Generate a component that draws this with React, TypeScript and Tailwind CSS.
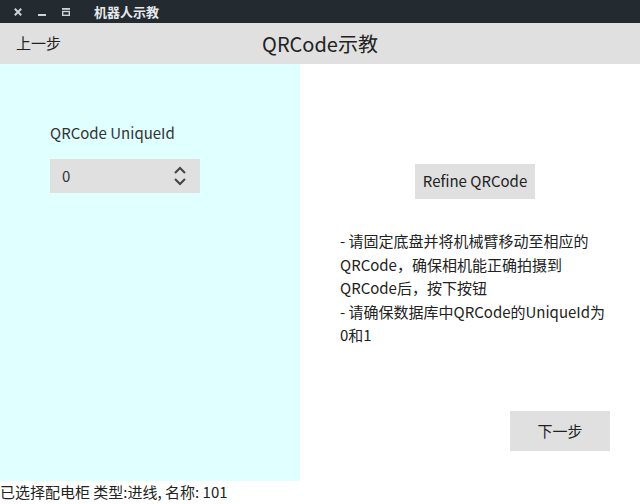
const font = { fontFamily: '"Noto Sans CJK SC", "Noto Sans", sans-serif' };

function TitleBar() {
  return (
    <div className="h-[23px] bg-[#232b31] flex items-center text-white">
      <div className="flex items-center gap-[16px] pl-[14px]">
        <svg width="8" height="8" viewBox="0 0 8 8">
          <path d="M0.8 0.8 L7.2 7.2 M7.2 0.8 L0.8 7.2" stroke="#cfd3d6" strokeWidth="2" />
        </svg>
        <svg width="8" height="8" viewBox="0 0 8 8">
          <rect x="0" y="6" width="8" height="2" fill="#cfd3d6" />
        </svg>
        <svg width="8" height="8" viewBox="0 0 8 8">
          <rect x="0" y="0" width="8" height="1.8" fill="#cfd3d6" />
          <rect x="0.7" y="3.5" width="6.6" height="3.8" fill="none" stroke="#cfd3d6" strokeWidth="1.4" />
        </svg>
      </div>
      <span className="ml-[24px] text-[13px] font-bold text-[#e6e9eb]">机器人示教</span>
    </div>
  );
}

export default function App() {
  return (
    <div className="w-[640px] h-[504px] bg-white flex flex-col text-[#333333] overflow-hidden" style={font}>
      <TitleBar />
      <div className="h-[41px] bg-[#e0e0e0] flex items-center relative">
        <span className="pl-[16px] text-[15px] text-[#222222]">上一步</span>
        <span className="absolute left-0 right-0 text-center text-[20px] text-[#222222]">QRCode示教</span>
      </div>
      <div className="flex h-[417px]">
        <div className="w-[300px] bg-[#e0ffff] pl-[50px] pt-[58px]">
          <div className="text-[15px] leading-[22px]">QRCode UniqueId</div>
          <div className="mt-[15px] w-[150px] h-[34px] bg-[#e0e0e0] flex items-center justify-between pl-[12px] pr-[13px]">
            <span className="text-[15px]">0</span>
            <svg width="14" height="20" viewBox="0 0 14 20">
              <path d="M2 7 L7 2 L12 7 M2 13 L7 18 L12 13" fill="none" stroke="#444" strokeWidth="2" />
            </svg>
          </div>
        </div>
        <div className="flex-1 flex flex-col">
          <div className="flex justify-center pt-[100px] pl-[10px]">
            <div className="w-[120px] h-[35px] bg-[#e0e0e0] flex items-center justify-center text-[15px] text-[#222222]">
              Refine QRCode
            </div>
          </div>
          <div className="pl-[40px] mt-[30px] text-[15px] leading-[23.5px] text-[#222222]">
            <div>- 请固定底盘并将机械臂移动至相应的</div>
            <div>QRCode，确保相机能正确拍摄到</div>
            <div>QRCode后，按下按钮</div>
            <div>- 请确保数据库中QRCode的UniqueId为</div>
            <div>0和1</div>
          </div>
          <div className="flex justify-end pr-[30px] mt-auto mb-[30px]">
            <div className="w-[100px] h-[40px] bg-[#e0e0e0] flex items-center justify-center text-[15px] text-[#222222]">
              下一步
            </div>
          </div>
        </div>
      </div>
      <div className="h-[23px] flex items-center text-[15px] text-[#222222]">已选择配电柜 类型:进线, 名称: 101</div>
    </div>
  );
}
